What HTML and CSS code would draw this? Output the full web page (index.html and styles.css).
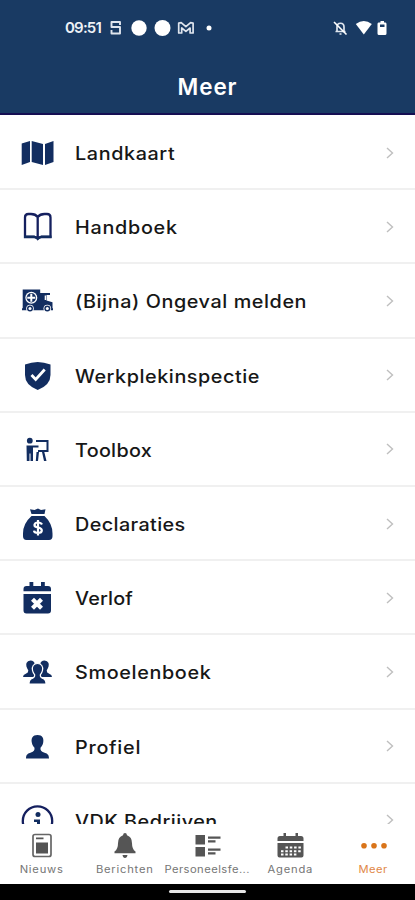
FILE: index.html
```html
<!DOCTYPE html>
<html lang="nl">
<head>
<meta charset="utf-8">
<title>Meer</title>
<link rel="stylesheet" href="styles.css">
</head>
<body>
<div class="phone">
  <header class="header">
    <div class="status">
      <span class="time">09:51</span>
      <svg class="notices" viewBox="0 0 106 18" fill="none" stroke="#fff">
        <path d="M11 6V3H2.500v5H11v6.500H2.500V11M2 8h9" stroke="#dfe5ee" stroke-width="1.900" stroke-linejoin="round"/>
        <circle cx="30" cy="9" r="7.700" fill="#fff" stroke="none"/>
        <circle cx="53.500" cy="9" r="8" fill="#fff" stroke="none"/>
        <path d="M69.700 14V4l2.500-.3 4.700 4 4.700-4 2.500.3v10h-3V9l-4.200 3.400L72.700 9v5z" stroke="#dfe5ee" stroke-width="1.700" stroke-linejoin="round"/>
        <circle cx="100" cy="9" r="2.500" fill="#fff" stroke="none"/>
      </svg>
      <svg class="system" viewBox="0 0 56 18" fill="none">
        <path d="M5 12V8C5 3 12 3 12 8V12M3.500 12.500h10M7.500 15h2" stroke="#dfe5ee" stroke-width="1.700"/>
        <path d="M2 3l12.500 12.500" stroke="#fff" stroke-width="1.600"/>
        <path d="M23.800 5Q31.800-.8 39.800 5L31.800 15.500z" fill="#fff"/>
        <path d="M48.500 2h3.500v1.500h1.500Q54.500 3.500 54.500 5v9.500q0 1.500-1.500 1.500h-6Q45.500 16 45.500 14.500V5q0-1.500 1-1.500h2z" fill="#fff"/>
        <path d="M48 5.500h4.500V8H48z" fill="#193a63"/>
      </svg>
    </div>
    <h1 class="title">Meer</h1>
  </header>

  <main class="list">
    <div class="row">
      <svg class="icon" viewBox="0 0 33 32"><path d="M.7 6.500L9 4v21l-8.300 3zM10.700 4l11.300 3v21l-11.300-3zM24 7l8.500-3v21L24 28z"/></svg>
      <span class="label landkaart">Landkaart</span><svg class="chevron" viewBox="0 0 8 12"><path d="M1 1l5.500 5L1 11"/></svg>
    </div>
    <div class="row">
      <svg class="icon" viewBox="0 0 33 32"><path class="line" d="M16.700 6v20M16.700 6Q14.500 3 10 3H7.500Q4 3 4 6.500V26h9q2.500 0 3.700 1.700Q18 26 20.500 26h9V6.500Q29.500 3 26 3h-2.500Q19 3 16.700 6z"/><path d="M3 24.500h10.500l3.200 2.500 3.300-2.500h10.500V27H20l-3.300 2-3.200-2H3z"/></svg>
      <span class="label handboek">Handboek</span><svg class="chevron" viewBox="0 0 8 12"><path d="M1 1l5.500 5L1 11"/></svg>
    </div>
    <div class="row">
      <svg class="icon" viewBox="0 0 33 32"><path d="M1.700 4.500h17.500V8H29v2h-3.500v5.500l6 1.700v6H32v2H1v-2h.7z"/><circle class="white" cx="10.300" cy="12.700" r="6"/><circle cx="10.300" cy="12.700" r="4.700"/><path class="white" d="M9.300 8.700h2v3h3v2h-3v3h-2v-3h-3v-2h3z"/><path class="white" d="M23.700 10.500h1.300v4.500h-1.300z"/><circle class="white" cx="9" cy="23.500" r="3.800"/><circle class="white" cx="26.300" cy="23.500" r="3.800"/><circle cx="9" cy="23.500" r="3"/><circle cx="26.300" cy="23.500" r="3"/><circle class="white" cx="9" cy="23.500" r="1.500"/><circle class="white" cx="26.300" cy="23.500" r="1.500"/></svg>
      <span class="label ongeval">(Bijna) Ongeval melden</span><svg class="chevron" viewBox="0 0 8 12"><path d="M1 1l5.500 5L1 11"/></svg>
    </div>
    <div class="row">
      <svg class="icon" viewBox="0 0 33 32"><path d="M4 4.500Q10.500 2 16.700 2t12.800 2.500V15q0 10-12.800 15Q4 25 4 15z"/><path d="M10.500 15l4.200 4.500 9-10" fill="none" stroke="#fff" stroke-width="2.800"/></svg>
      <span class="label werkplek">Werkplekinspectie</span><svg class="chevron" viewBox="0 0 8 12"><path d="M1 1l5.500 5L1 11"/></svg>
    </div>
    <div class="row">
      <svg class="icon" viewBox="0 0 33 32"><circle cx="8.800" cy="6.700" r="2.900"/><path d="M5.500 11.500h12v2H12V27H9.500v-7.500h-1V27H5.800zM15 6h12.500v12H17v-2h8.500V8H15zM15.500 18h2.500l-1 9h-2.200zM21 18h2.300l2.200 9H23z"/></svg>
      <span class="label toolbox">Toolbox</span><svg class="chevron" viewBox="0 0 8 12"><path d="M1 1l5.500 5L1 11"/></svg>
    </div>
    <div class="row">
      <svg class="icon" viewBox="0 0 33 32"><path d="M9 1.300l4.500.8L17 .5l3 1.600 4.500-.8-1 4.700h-13zM10.500 8h13q8 7.500 8 17.500v2.800Q31.500 32 28 32H5.500Q2 32 2 28.300v-2.800Q2 15.500 10.500 8z"/><path d="M21 16.500q-1-2-4-2t-3.500 2.300q-.3 2 3.500 2.700t3.800 3q0 2.500-3.800 2.500t-4-2.300M17 12v15.500" fill="none" stroke="#fff" stroke-width="2.200"/></svg>
      <span class="label declaraties">Declaraties</span><svg class="chevron" viewBox="0 0 8 12"><path d="M1 1l5.500 5L1 11"/></svg>
    </div>
    <div class="row">
      <svg class="icon" viewBox="0 0 33 32"><path d="M8.500 0h3.800v4H20V0h3.800v4H27q3 0 3 3v2.300H2.500V7q0-3 3-3h3zM2.500 12H30v16.500q0 3-3 3H5.500q-3 0-3-3z"/><path d="M11.500 17.300l9 9M20.500 17.300l-9 9" stroke="#fff" stroke-width="4.200"/></svg>
      <span class="label verlof">Verlof</span><svg class="chevron" viewBox="0 0 8 12"><path d="M1 1l5.500 5L1 11"/></svg>
    </div>
    <div class="row">
      <svg class="icon" viewBox="0 0 33 32"><path d="M4.800 17.700q2.700-1 2.500-3.200Q4.500 10 5.500 7q1-2.500 4-2.500 3.800 0 4.200 3.500.2 3.500-2 6.500 0 2 1.500 3V21H2q0-2.500 2.800-3.300zM28.200 17.700q-2.700-1-2.500-3.200Q28.500 10 27.500 7q-1-2.500-4-2.500-3.800 0-4.200 3.500-.2 3.500 2 6.500 0 2-1.500 3V21H31q0-2.500-2.800-3.300z"/><path d="M16.500 7.500c-4 0-5.800 3-5 6.800.4 2 1.200 3.300 2.200 4.500.2 2.200-.7 3-3.200 3.900Q8 23.800 8 28h17q0-4.200-2.500-5.300c-2.500-.9-3.400-1.700-3.200-3.900 1-1.200 1.800-2.500 2.200-4.500.8-3.800-1-6.800-5-6.800z" stroke="#fff" stroke-width="1.200"/></svg>
      <span class="label smoelenboek">Smoelenboek</span><svg class="chevron" viewBox="0 0 8 12"><path d="M1 1l5.500 5L1 11"/></svg>
    </div>
    <div class="row">
      <svg class="icon" viewBox="0 0 33 32"><path d="M16.500 4c-5 0-6.500 3.500-5.700 7.500.4 2.500 1.500 4 2.700 5.300.3 3-.8 3.700-3.500 4.700-3.200 1-5 2-5 6h23c0-4-1.800-5-5-6-2.700-1-3.800-1.700-3.500-4.700 1.200-1.300 2.300-2.800 2.700-5.300C23 7.500 21.500 4 16.500 4z"/></svg>
      <span class="label profiel">Profiel</span><svg class="chevron" viewBox="0 0 8 12"><path d="M1 1l5.500 5L1 11"/></svg>
    </div>
    <div class="row">
      <svg class="icon" viewBox="0 0 33 32"><circle class="line" cx="16.500" cy="16" r="14.700"/><circle cx="17" cy="9.500" r="2.500"/><path d="M13 14.500h6V24h-3v-7h-3z"/></svg>
      <span class="label vdk">VDK Bedrijven</span><svg class="chevron" viewBox="0 0 8 12"><path d="M1 1l5.500 5L1 11"/></svg>
    </div>
  </main>

  <nav class="tabs">
    <div class="tab">
      <svg class="tab-icon" viewBox="0 0 30 30"><rect x="6" y="3.500" width="18" height="22" rx="2" fill="none" stroke="#666" stroke-width="1.700"/><path d="M9 11.500h12v11H9zM9 6.500h7.500v1.700H9z"/></svg>
      <span class="tab-label nieuws">Nieuws</span>
    </div>
    <div class="tab">
      <svg class="tab-icon" viewBox="0 0 30 30"><path d="M15 2q1.800 0 2 2.200 5 1.700 5 8 0 6 3.500 8.300v1.800h-21v-1.800Q8 18.200 8 12.200q0-6.300 5-8Q13.200 2 15 2zM12.500 24h5q-.5 3-2.500 3t-2.500-3z"/></svg>
      <span class="tab-label berichten">Berichten</span>
    </div>
    <div class="tab">
      <svg class="tab-icon" viewBox="0 0 30 30"><path d="M2.500 4H12v9.500H2.500zM2.500 16H12v9.500H2.500zM15 5.500h12.500v2.300H15zM15 9.300h7.500v2.200H15zM15 17.500h12.500v2.300H15zM15 21.300h7.500v2.200H15z"/></svg>
      <span class="tab-label personeel">Personeelsfe...</span>
    </div>
    <div class="tab">
      <svg class="tab-icon" viewBox="0 0 30 30"><path d="M7.500 2H10v3h9.500V2H22v3h3q2.500 0 2.500 2.500V10h-26V7.500Q1.500 5 4 5h3.500zM1.500 12h26v12.500q0 2-2 2h-22q-2 0-2-2z"/><path d="M9.500 16.500H25M5 20.200h20M5 23.500h15.500" fill="none" stroke="#fff" stroke-width="2" stroke-dasharray="2.500 1.800"/></svg>
      <span class="tab-label agenda">Agenda</span>
    </div>
    <div class="tab active">
      <svg class="tab-icon" viewBox="0 0 30 30"><circle cx="5" cy="14.700" r="2.800"/><circle cx="15" cy="14.700" r="2.800"/><circle cx="25" cy="14.700" r="2.800"/></svg>
      <span class="tab-label meer">Meer</span>
    </div>
  </nav>
  <div class="gesture"><span class="pill"></span></div>
</div>
</body>
</html>
```
FILE: styles.css
```css
* { box-sizing: border-box; }
body { margin: 0; background: #fff; font-family: Inter, "Liberation Sans", sans-serif; }
svg { display: block; flex: none; }
.phone { width: 415px; height: 900px; display: flex; flex-direction: column; overflow: hidden; }

.header { height: 115px; flex: none; background: #193a63; border-bottom: 2px solid #150e52; color: #fff; }
.status { height: 58px; padding: 0 27px 0 65px; display: flex; align-items: center; }
.time { width: 44px; margin-top: -3px; font-size: 15px; font-weight: 600; letter-spacing: -0.8px; color: #edf1f6; white-space: nowrap; }
.notices { width: 106px; height: 18px; margin-top: -2px; }
.system { width: 56px; height: 18px; margin: -2px 0 0 auto; }
.title { margin: 14px 0 0; font-size: 22.500px; line-height: 30px; font-weight: 600; letter-spacing: 0.9px; text-align: center; }

.list { flex: 1; min-height: 0; padding-top: 1px; overflow: hidden; background: #fff; }
.row { height: 74.200px; padding: 1px 20px 0 21px; display: flex; align-items: center; border-bottom: 2px solid #f0f0f0; }
.icon { width: 33px; height: 32px; margin-top: 1px; margin-right: 21px; fill: #122d60; }
.icon .line { fill: none; stroke: #15205f; stroke-width: 2.300; }
.icon .white { fill: #fff; }
.label { margin-top: 2px; margin-right: auto; font-size: 18px; font-weight: 500; color: #171717; white-space: nowrap; transform: scaleX(1.1); transform-origin: left; }
.landkaart { letter-spacing: 0.54px; }
.handboek { letter-spacing: 0.64px; }
.ongeval { letter-spacing: 0.52px; }
.werkplek { letter-spacing: 0.5px; }
.toolbox { letter-spacing: 0.25px; }
.declaraties { letter-spacing: 0.35px; }
.verlof { letter-spacing: 0.15px; }
.smoelenboek { letter-spacing: 0.58px; }
.profiel { letter-spacing: 0.65px; }
.vdk { letter-spacing: 0.43px; }
.chevron { width: 8px; height: 12px; margin-right: 1px; fill: none; stroke: #bfbfbf; stroke-width: 1.400; }

.tabs { height: 59.500px; flex: none; display: grid; grid-template-columns: repeat(5, 83px); background: #fff; }
.tab { display: flex; flex-direction: column; align-items: center; padding-top: 6.500px; fill: #555; color: #757575; }
.tab-icon { width: 30px; height: 30px; }
.tab-label { margin-top: 1px; font-size: 10px; line-height: 15px; letter-spacing: 0.4px; white-space: nowrap; transform: scaleX(1.12); }
.nieuws { letter-spacing: 0.7px; }
.berichten { letter-spacing: 0.7px; }
.agenda { letter-spacing: 0.7px; }
.active { fill: #d9741a; color: #df8747; }
.gesture { height: 16.500px; flex: none; background: #000; display: flex; justify-content: center; align-items: center; }
.pill { width: 77px; height: 3px; border-radius: 2px; background: #e5e5e5; }
```
